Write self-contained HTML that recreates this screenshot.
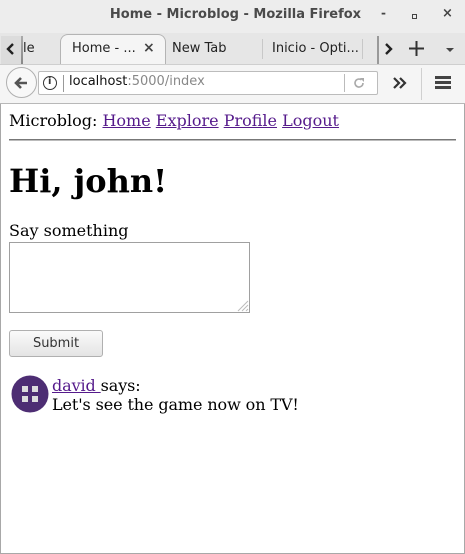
<!DOCTYPE html>
<html><head><meta charset="utf-8"><style>
*{box-sizing:border-box;margin:0;padding:0}
html,body{width:465px;height:554px;overflow:hidden;background:#fff}
body{position:relative;font-family:"DejaVu Serif","Liberation Serif",serif;}
.ui{font-family:"DejaVu Sans","Liberation Sans",sans-serif;position:absolute}
.abs{position:absolute;white-space:nowrap}
a{color:#551a8b;text-decoration:underline}
</style></head><body>
<div class="abs" style="left:0;top:0;width:465px;height:554px;border:1px solid #a8a8a8;border-top:none"></div>
<div class="abs" style="left:0;top:0;width:465px;height:33px;background:#ededed"></div>
<div class="ui" style="left:0;top:7px;width:465px;text-align:center;font-size:13px;font-weight:bold;color:#4a4a4a;padding-left:6px">Home - Microblog - Mozilla Firefox</div>
<div class="ui" style="left:381px;top:6px;font-size:12px;color:#444;font-weight:bold">-</div>
<div class="abs" style="left:412px;top:14px;width:5px;height:5px;border:1.5px solid #444"></div>
<div class="ui" style="left:442px;top:6px;font-size:13px;color:#444;font-weight:bold">×</div>
<div class="abs" style="left:0;top:33px;width:465px;height:31px;background:#e6e6e6"></div>
<div class="abs" style="left:1px;top:36px;width:21px;height:28px;background:#dcdcdc"></div>
<div class="abs" style="left:21px;top:36px;width:2px;height:28px;background:linear-gradient(#aaa,#888)"></div>
<svg class="abs" style="left:6px;top:43px" width="10" height="12" viewBox="0 0 10 12"><path d="M7 1L2 6l5 5" stroke="#222" stroke-width="2.4" fill="none"/></svg>
<div class="ui" style="left:23px;top:41px;font-size:13px;color:#222">le</div>
<div class="abs" style="left:60px;top:34px;width:106px;height:31px;background:#f5f5f5;border:1px solid #b4b4b4;border-bottom:none;border-radius:8px 8px 0 0"></div>
<div class="ui" style="left:72px;top:41px;font-size:13px;color:#222">Home - ...</div>
<div class="ui" style="left:143px;top:40px;font-size:14px;color:#444;font-weight:bold">×</div>
<div class="ui" style="left:172px;top:41px;font-size:13px;color:#222">New Tab</div>
<div class="abs" style="left:262px;top:39px;width:1px;height:20px;background:#c8c8c8"></div>
<div class="ui" style="left:272px;top:41px;font-size:13px;color:#222">Inicio - Opti...</div>
<div class="abs" style="left:362px;top:39px;width:1px;height:20px;background:#c8c8c8"></div>
<div class="abs" style="left:377px;top:36px;width:2px;height:28px;background:#999"></div>
<svg class="abs" style="left:383px;top:43px" width="10" height="12" viewBox="0 0 10 12"><path d="M3 1l5 5-5 5" stroke="#222" stroke-width="2.4" fill="none"/></svg>
<svg class="abs" style="left:409px;top:41px" width="15" height="15" viewBox="0 0 15 15"><path d="M7.5 0v15M0 7.5h15" stroke="#333" stroke-width="2"/></svg>
<div class="abs" style="left:446px;top:48px;border-left:4px solid transparent;border-right:4px solid transparent;border-top:4px solid #444"></div>
<div class="abs" style="left:0;top:64px;width:465px;height:40px;background:#f5f5f5;border-top:1px solid #cfcfcf;border-bottom:1px solid #b8b8b8"></div>
<div class="abs" style="left:38px;top:71px;width:340px;height:24px;background:#fff;border:1px solid #bcbcbc;border-radius:2px"></div>
<div class="abs" style="left:6px;top:67px;width:31px;height:31px;border-radius:50%;background:#f8f8f8;border:1px solid #b0b0b0"></div>
<svg class="abs" style="left:12px;top:74px" width="18" height="18" viewBox="0 0 18 18"><path d="M15 9H5M9 4L4 9l5 5" stroke="#555" stroke-width="2.6" fill="none"/></svg>
<div class="abs" style="left:43px;top:76px;width:14px;height:14px;border-radius:50%;border:1.3px solid #333"></div>
<div class="ui" style="left:48px;top:76px;font-size:10px;color:#333;font-weight:bold">i</div>
<div class="abs" style="left:63px;top:75px;width:1px;height:17px;background:#999"></div>
<div class="ui" style="left:69px;top:74px;font-size:13px;color:#111">localhost<span style="color:#888">:5000/index</span></div>
<div class="abs" style="left:344px;top:74px;width:1px;height:18px;background:#bbb"></div>
<svg class="abs" style="left:352px;top:76px" width="14" height="14" viewBox="0 0 14 14"><path d="M11 7a4 4 0 1 1-1.5-3.1" stroke="#aaa" stroke-width="1.6" fill="none"/><path d="M8 2h4v4z" fill="#aaa"/></svg>
<svg class="abs" style="left:393px;top:77px" width="14" height="12" viewBox="0 0 14 12"><path d="M1 1l5 5-5 5M7 1l5 5-5 5" stroke="#333" stroke-width="2.2" fill="none"/></svg>
<div class="abs" style="left:421px;top:68px;width:1px;height:32px;background:#d0d0d0"></div>
<div class="abs" style="left:435px;top:76px;width:16px;height:3px;background:#444;box-shadow:0 5px 0 #444,0 10px 0 #444"></div>
<div class="abs" style="left:9px;top:111px;font-size:16px;line-height:20px;color:#000">Microblog: <a>Home</a> <a>Explore</a> <a>Profile</a> <a>Logout</a></div>
<div class="abs" style="left:9px;top:139px;width:447px;height:2px;border-top:1px solid #777;border-bottom:1px solid #bbb"></div>
<div class="abs" style="left:9px;top:162px;font-size:32px;font-weight:bold;line-height:38px;color:#000">Hi, john!</div>
<div class="abs" style="left:9px;top:221px;font-size:16px;line-height:20px">Say something</div>
<div class="abs" style="left:9px;top:242px;width:241px;height:71px;border:1px solid #a0a0a0;background:#fff"></div>
<svg class="abs" style="left:236px;top:299px" width="13" height="13" viewBox="0 0 13 13"><path d="M12 2L2 12M12 6L6 12M12 10L10 12" stroke="#bbb" stroke-width="1"/></svg>
<div class="ui" style="left:9px;top:330px;width:94px;height:27px;border:1px solid #b0b0b0;border-radius:3px;background:linear-gradient(#fafafa,#e4e4e4);font-size:13px;color:#333;text-align:center;line-height:25px">Submit</div>
<svg class="abs" style="left:11px;top:375px" width="38" height="38" viewBox="0 0 38 38"><circle cx="19" cy="19" r="18.5" fill="#4d2d73"/><path d="M1 1h6L1 7zM37 1h-6l6 6zM1 37h6l-6-6zM37 37h-6l6-6z" fill="#fff"/><rect x="11" y="11" width="6" height="6" fill="#ddd"/><rect x="21" y="11" width="6" height="6" fill="#ddd"/><rect x="11" y="21" width="6" height="6" fill="#ddd"/><rect x="21" y="21" width="6" height="6" fill="#ddd"/></svg>
<div class="abs" style="left:52px;top:376px;font-size:16px;line-height:19px;letter-spacing:-0.1px"><a>david </a>says:<br>Let's see the game now on TV!</div>
</body></html>
